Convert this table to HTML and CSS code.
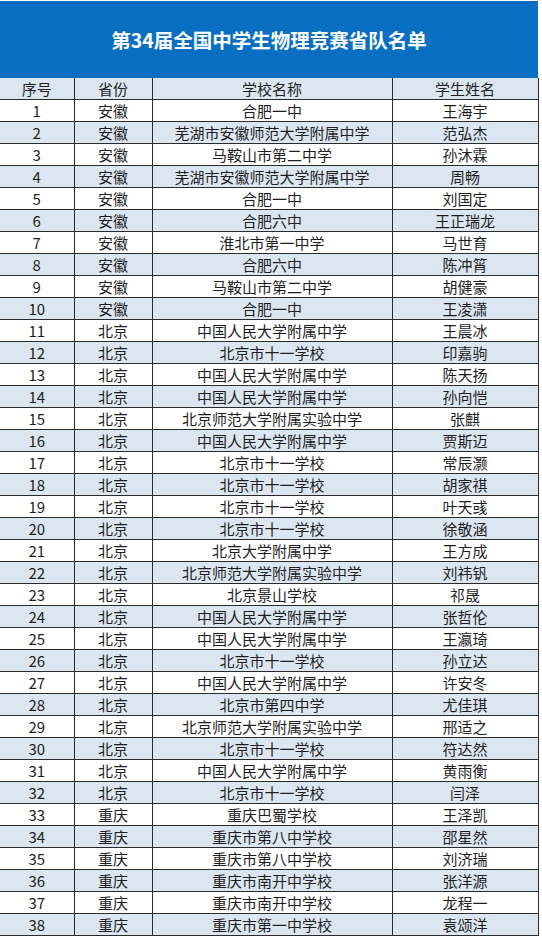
FILE: index.html
```html
<!DOCTYPE html>
<html lang="zh-CN">
<head>
<meta charset="utf-8">
<title>第34届全国中学生物理竞赛省队名单</title>
<link rel="stylesheet" href="styles.css">
</head>
<body>
<div class="sheet">
  <div class="title">第34届全国中学生物理竞赛省队名单</div>
  <table class="list">
    <colgroup>
      <col class="c-no"><col class="c-prov"><col class="c-school"><col class="c-name">
    </colgroup>
    <thead>
      <tr><th>序号</th><th>省份</th><th>学校名称</th><th>学生姓名</th></tr>
    </thead>
    <tbody>
      <tr><td>1</td><td>安徽</td><td>合肥一中</td><td>王海宇</td></tr>
      <tr><td>2</td><td>安徽</td><td>芜湖市安徽师范大学附属中学</td><td>范弘杰</td></tr>
      <tr><td>3</td><td>安徽</td><td>马鞍山市第二中学</td><td>孙沐霖</td></tr>
      <tr><td>4</td><td>安徽</td><td>芜湖市安徽师范大学附属中学</td><td>周畅</td></tr>
      <tr><td>5</td><td>安徽</td><td>合肥一中</td><td>刘国定</td></tr>
      <tr><td>6</td><td>安徽</td><td>合肥六中</td><td>王正瑞龙</td></tr>
      <tr><td>7</td><td>安徽</td><td>淮北市第一中学</td><td>马世育</td></tr>
      <tr><td>8</td><td>安徽</td><td>合肥六中</td><td>陈冲筲</td></tr>
      <tr><td>9</td><td>安徽</td><td>马鞍山市第二中学</td><td>胡健豪</td></tr>
      <tr><td>10</td><td>安徽</td><td>合肥一中</td><td>王凌潇</td></tr>
      <tr><td>11</td><td>北京</td><td>中国人民大学附属中学</td><td>王晨冰</td></tr>
      <tr><td>12</td><td>北京</td><td>北京市十一学校</td><td>印嘉驹</td></tr>
      <tr><td>13</td><td>北京</td><td>中国人民大学附属中学</td><td>陈天扬</td></tr>
      <tr><td>14</td><td>北京</td><td>中国人民大学附属中学</td><td>孙向恺</td></tr>
      <tr><td>15</td><td>北京</td><td>北京师范大学附属实验中学</td><td>张麒</td></tr>
      <tr><td>16</td><td>北京</td><td>中国人民大学附属中学</td><td>贾斯迈</td></tr>
      <tr><td>17</td><td>北京</td><td>北京市十一学校</td><td>常辰灏</td></tr>
      <tr><td>18</td><td>北京</td><td>北京市十一学校</td><td>胡家祺</td></tr>
      <tr><td>19</td><td>北京</td><td>北京市十一学校</td><td>叶天彧</td></tr>
      <tr><td>20</td><td>北京</td><td>北京市十一学校</td><td>徐敬涵</td></tr>
      <tr><td>21</td><td>北京</td><td>北京大学附属中学</td><td>王方成</td></tr>
      <tr><td>22</td><td>北京</td><td>北京师范大学附属实验中学</td><td>刘祎钒</td></tr>
      <tr><td>23</td><td>北京</td><td>北京景山学校</td><td>祁晟</td></tr>
      <tr><td>24</td><td>北京</td><td>中国人民大学附属中学</td><td>张哲伦</td></tr>
      <tr><td>25</td><td>北京</td><td>中国人民大学附属中学</td><td>王瀛琦</td></tr>
      <tr><td>26</td><td>北京</td><td>北京市十一学校</td><td>孙立达</td></tr>
      <tr><td>27</td><td>北京</td><td>中国人民大学附属中学</td><td>许安冬</td></tr>
      <tr><td>28</td><td>北京</td><td>北京市第四中学</td><td>尤佳琪</td></tr>
      <tr><td>29</td><td>北京</td><td>北京师范大学附属实验中学</td><td>邢适之</td></tr>
      <tr><td>30</td><td>北京</td><td>北京市十一学校</td><td>符达然</td></tr>
      <tr><td>31</td><td>北京</td><td>中国人民大学附属中学</td><td>黄雨衡</td></tr>
      <tr><td>32</td><td>北京</td><td>北京市十一学校</td><td>闫泽</td></tr>
      <tr><td>33</td><td>重庆</td><td>重庆巴蜀学校</td><td>王泽凯</td></tr>
      <tr><td>34</td><td>重庆</td><td>重庆市第八中学校</td><td>邵星然</td></tr>
      <tr><td>35</td><td>重庆</td><td>重庆市第八中学校</td><td>刘济瑞</td></tr>
      <tr><td>36</td><td>重庆</td><td>重庆市南开中学校</td><td>张洋源</td></tr>
      <tr><td>37</td><td>重庆</td><td>重庆市南开中学校</td><td>龙程一</td></tr>
      <tr><td>38</td><td>重庆</td><td>重庆市第一中学校</td><td>袁颂洋</td></tr>
    </tbody>
  </table>
</div>
</body>
</html>
```
FILE: styles.css
```css
html, body {
  margin: 0;
  padding: 0;
  background: #ffffff;
}
body {
  font-family: "Noto Sans CJK SC", "Noto Sans", sans-serif;
  color: #1e1e1e;
}
.sheet {
  width: 538px;
  padding-top: 1px;
}
.title {
  height: 77px;
  background: #0a6fc2;
  color: #ffffff;
  font-weight: 700;
  font-size: 19.5px;
  line-height: 77px;
  text-align: center;
  letter-spacing: 0;
}
.list {
  width: 538px;
  border-collapse: collapse;
  table-layout: fixed;
  font-size: 15px;
}
.c-no { width: 74px; }
.c-prov { width: 78px; }
.c-school { width: 240px; }
.c-name { width: 146px; }
.list th, .list td {
  border: 1px solid #2a2a2a;
  padding: 0;
  height: 21px;
  line-height: 20px;
  text-align: center;
  font-weight: 400;
  white-space: nowrap;
  overflow: hidden;
}
.list th:first-child, .list td:first-child {
  border-left: none;
}
.list thead tr {
  background: #dce6f1;
}
.list thead th {
  border-top: none;
}
.list tbody tr:nth-child(even) {
  background: #dce6f1;
}
.list tbody tr:nth-child(odd) {
  background: #ffffff;
}
```
